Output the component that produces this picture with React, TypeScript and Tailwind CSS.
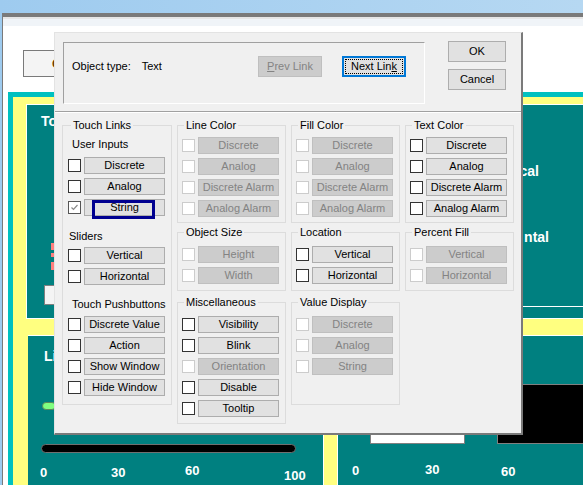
import React from 'react';

type Item = { label: string; off?: boolean; checked?: boolean; selected?: boolean };

const CheckBox: React.FC<{ off?: boolean; checked?: boolean }> = ({ off, checked }) => (
  <div
    className={`w-[13px] h-[13px] shrink-0 border bg-white flex items-center justify-center ${
      off ? 'border-[#cccccc]' : checked ? 'border-[#555555]' : 'border-[#333333]'
    }`}
  >
    {checked && (
      <svg width="9" height="9" viewBox="0 0 9 9">
        <path d="M1.5 4.5 L3.5 6.5 L7.5 2" stroke="#8a8a8a" strokeWidth="1.2" fill="none" />
      </svg>
    )}
  </div>
);

const Btn: React.FC<{ label: string; off?: boolean }> = ({ label, off }) => (
  <div
    className={`h-[17px] w-[81px] shrink-0 border flex items-center justify-center leading-none ${
      off ? 'bg-[#cccccc] border-[#bfbfbf] text-[#838383]' : 'bg-[#e1e1e1] border-[#adadad] text-black'
    }`}
  >
    {label}
  </div>
);

const Row: React.FC<{ item: Item; first?: boolean }> = ({ item, first }) => (
  <div className={`relative flex items-center gap-[3px] ${first ? 'pl-[5px]' : 'pl-[4px]'}`}>
    <CheckBox off={item.off} checked={item.checked} />
    <Btn label={item.label} off={item.off} />
    {item.selected && (
      <div className="absolute left-[29px] top-[1px] w-[63px] h-[19px] border-[3px] border-[#000090]" />
    )}
  </div>
);

const Rows: React.FC<{ items: Item[]; first?: boolean; className?: string }> = ({ items, first, className }) => (
  <div className={`flex flex-col gap-[4px] ${className ?? ''}`}>
    {items.map((it) => (
      <Row key={it.label} item={it} first={first} />
    ))}
  </div>
);

const Group: React.FC<{
  title: string;
  className: string;
  items: Item[];
  pad: string;
}> = ({ title, className, items, pad }) => (
  <fieldset className={`border border-[#dcdcdc] ${className}`}>
    <legend className="ml-[6px] px-[2px] leading-[13px]">{title}</legend>
    <Rows items={items} className={pad} />
  </fieldset>
);

const colorItems = (off: boolean): Item[] => [
  { label: 'Discrete', off },
  { label: 'Analog', off },
  { label: 'Discrete Alarm', off },
  { label: 'Analog Alarm', off },
];

function Dialog() {
  return (
    <div className="absolute left-[54px] top-[32px] w-[469px] h-[403px] bg-[#f0f0f0] border-t border-l border-r-2 border-b-2 border-t-[#e3e3e3] border-l-[#e3e3e3] border-r-[#7a7a7a] border-b-[#7a7a7a] flex flex-col text-[11px] text-black">
      {/* header */}
      <div className="h-[78px] flex pl-[8px] pt-[9px]">
        <div className="w-[362px] h-[62px] border border-t-[#a0a0a0] border-l-[#a0a0a0] border-r-white border-b-white">
          <div className="flex items-center h-[21px] mt-[13px] pl-[8px] pr-[18px]">
            <span>Object type:</span>
            <span className="ml-[11px]">Text</span>
            <div className="ml-auto flex gap-[20px]">
              <div className="w-[64px] h-[21px] border border-[#bfbfbf] bg-[#cccccc] text-[#838383] flex items-center justify-center">
                <span><span className="underline">P</span>rev Link</span>
              </div>
              <div className="w-[64px] h-[21px] border-2 border-[#0078d7] bg-[#e1e1e1] p-px">
                <div className="h-full w-full border border-dotted border-black flex items-center justify-center">
                  <span>Next Lin<span className="underline">k</span></span>
                </div>
              </div>
            </div>
          </div>
        </div>
        <div className="ml-[23px] -mt-px flex flex-col gap-[7px]">
          <div className="w-[58px] h-[21px] border border-[#adadad] bg-[#e1e1e1] flex items-center justify-center">OK</div>
          <div className="w-[58px] h-[21px] border border-[#adadad] bg-[#e1e1e1] flex items-center justify-center">Cancel</div>
        </div>
      </div>
      <div className="h-px bg-[#a0a0a0]" />
      <div className="h-px bg-white" />

      {/* link groups */}
      <div className="pt-[6px] pl-[7px] grid grid-cols-[110px_109px_109px_109px] gap-x-[5px] items-start">
        <fieldset className="border border-[#dcdcdc] h-[286px]">
          <legend className="ml-[8px] px-[2px] leading-[13px]">Touch Links</legend>
          <div className="mt-[6px] pl-[9px] h-[13px] leading-[13px]">User Inputs</div>
          <Rows
            first
            className="mt-[6px]"
            items={[{ label: 'Discrete' }, { label: 'Analog' }, { label: 'String', checked: true, selected: true }]}
          />
          <div className="mt-[14px] pl-[6px] h-[13px] leading-[13px]">Sliders</div>
          <Rows first className="mt-[4px]" items={[{ label: 'Vertical' }, { label: 'Horizontal' }]} />
          <div className="mt-[13px] pl-[9px] h-[13px] leading-[13px]">Touch Pushbuttons</div>
          <Rows
            first
            className="mt-[5px]"
            items={[{ label: 'Discrete Value' }, { label: 'Action' }, { label: 'Show Window' }, { label: 'Hide Window' }]}
          />
        </fieldset>

        <div className="flex flex-col">
          <Group title="Line Color" className="h-[104px]" pad="pt-[5px]" items={colorItems(true)} />
          <Group
            title="Object Size"
            className="mt-[3px] h-[65px]"
            pad="pt-[7px]"
            items={[{ label: 'Height', off: true }, { label: 'Width', off: true }]}
          />
          <Group
            title="Miscellaneous"
            className="mt-[5px] h-[128px]"
            pad="pt-[7px]"
            items={[
              { label: 'Visibility' },
              { label: 'Blink' },
              { label: 'Orientation', off: true },
              { label: 'Disable' },
              { label: 'Tooltip' },
            ]}
          />
        </div>

        <div className="flex flex-col">
          <Group title="Fill Color" className="h-[104px]" pad="pt-[5px]" items={colorItems(true)} />
          <Group
            title="Location"
            className="mt-[3px] h-[65px]"
            pad="pt-[7px]"
            items={[{ label: 'Vertical' }, { label: 'Horizontal' }]}
          />
          <Group
            title="Value Display"
            className="mt-[5px] h-[109px]"
            pad="pt-[7px]"
            items={[
              { label: 'Discrete', off: true },
              { label: 'Analog', off: true },
              { label: 'String', off: true },
            ]}
          />
        </div>

        <div className="flex flex-col">
          <Group title="Text Color" className="h-[104px]" pad="pt-[5px]" items={colorItems(false)} />
          <Group
            title="Percent Fill"
            className="mt-[3px] h-[65px]"
            pad="pt-[7px]"
            items={[
              { label: 'Vertical', off: true },
              { label: 'Horizontal', off: true },
            ]}
          />
        </div>
      </div>
    </div>
  );
}

const Num: React.FC<{ className: string; children: React.ReactNode }> = ({ className, children }) => (
  <span className={`absolute text-[13px] font-bold leading-none text-white ${className}`}>{children}</span>
);

export default function App() {
  return (
    <div className="relative w-[583px] h-[485px] overflow-hidden bg-linear-to-r from-[#9ecbef] to-[#b6d8f2] font-['Liberation_Sans',Arial,sans-serif]">
      <div className="h-[13px]" />
      <div className="ml-[2px] h-[472px] border-l border-[#7a7a7a] bg-white flex flex-col">
        <div className="h-[4px] bg-[#7a7a7a]" />
        <div className="h-[2px] bg-[#e6e6e6]" />
        <div className="h-[7px] bg-[#f0f4f8]" />
        <div className="flex-1 flex flex-col">
          <div className="mt-[24px] ml-[20px] w-[70px] h-[27px] border border-[#7a7a7a] bg-[#f4f4f4] flex items-center pl-[28px]">
            <span className="text-[12px] font-bold text-[#6a3c00]">C</span>
          </div>

          {/* HMI screen */}
          <div className="mt-[15px] ml-[5px] flex-1 bg-[#00c0c0] pt-[5px] pl-[5px]">
            <div className="h-full bg-[#ffff80] pt-[7px] pl-[13px] flex flex-col">
              <div className="relative h-[215px] bg-[#008080] border-t border-l border-b border-white">
                <span className="absolute left-[14px] top-[9px] text-[14px] font-bold leading-none text-white">To</span>
                <div className="absolute left-[24px] top-[138px] w-[3px] h-[7px] bg-[#ff8080]" />
                <div className="absolute left-[24px] top-[148px] w-[3px] h-[4px] bg-[#ff8080]" />
                <div className="absolute left-[24px] top-[157px] w-[3px] h-[8px] bg-[#ff8080]" />
                <div className="absolute left-[17px] top-[180px] w-[24px] h-[20px] bg-[#f4f4f4] border border-[#808080]" />
                <span className="absolute right-[44px] top-[59px] text-[14px] font-bold leading-none text-white">cal</span>
                <span className="absolute right-[34px] top-[125px] text-[14px] font-bold leading-none text-white">ntal</span>
                <div className="absolute left-[273px] right-0 top-[201px] h-px bg-white" />
              </div>
              <div className="mt-[16px] flex flex-1">
                <div className="relative ml-[2px] w-[296px] bg-[#008080] border-t border-r border-white">
                  <span className="absolute left-[16px] top-[13px] text-[14px] font-bold leading-none text-white">Li</span>
                  <div className="absolute left-[14px] top-[66px] w-[14px] h-[8px] rounded-full bg-[#80ff80] border border-[#5a8a5a]" />
                  <div className="absolute left-[13px] top-[108px] w-[255px] h-[9px] rounded-full bg-black border border-[#707070]" />
                  <Num className="left-[12px] top-[130px]">0</Num>
                  <Num className="left-[83px] top-[130px]">30</Num>
                  <Num className="left-[157px] top-[128px]">60</Num>
                  <Num className="left-[256px] top-[133px]">100</Num>
                </div>
                <div className="relative ml-[13px] flex-1 bg-[#008080] border-t border-l border-white">
                  <div className="absolute left-[32px] top-[84px] w-[95px] h-[24px] bg-white border border-[#808080]" />
                  <div className="absolute left-[159px] top-[48px] w-[100px] h-[60px] bg-black border border-[#808080]" />
                  <Num className="left-[14px] top-[128px]">0</Num>
                  <Num className="left-[87px] top-[127px]">30</Num>
                  <Num className="left-[163px] top-[129px]">60</Num>
                </div>
              </div>
            </div>
          </div>
        </div>
      </div>
      <Dialog />
    </div>
  );
}
